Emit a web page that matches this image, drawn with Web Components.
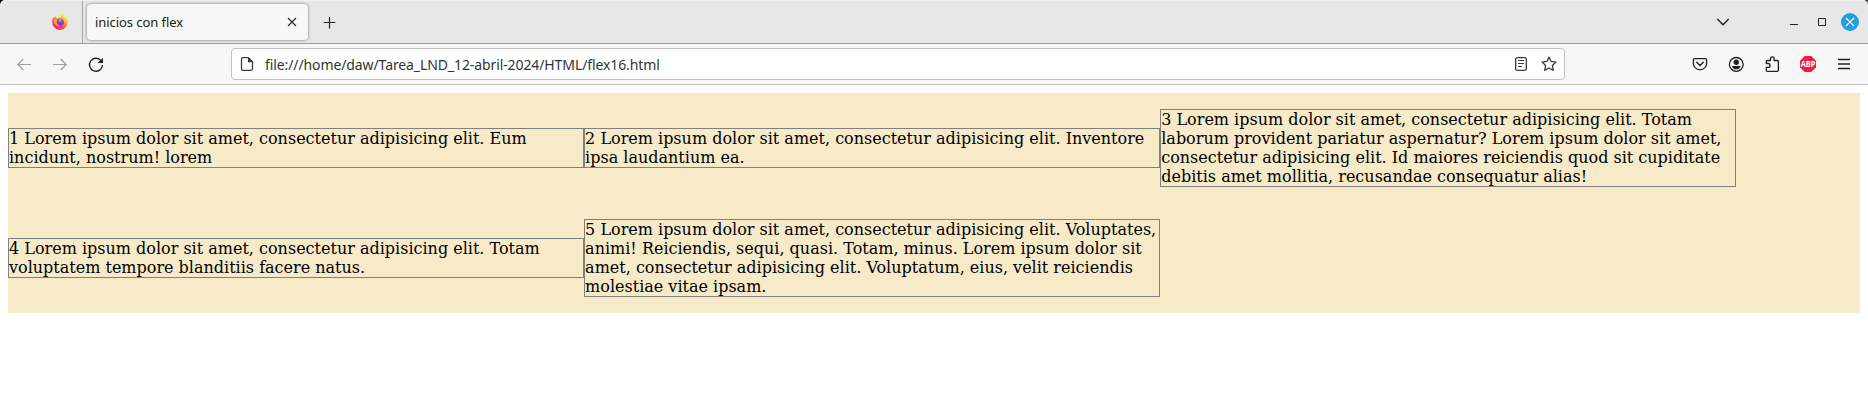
<!DOCTYPE html>
<html lang="es">
<head>
<meta charset="utf-8">
<title>inicios con flex</title>
<style>
html{background:#fff}
body{margin:0;font-family:"DejaVu Serif",serif;font-size:16px;color:#000}
</style>
</head>
<body>
<browser-window>
  <tab-bar slot="tabs"><browser-tab>inicios con flex</browser-tab></tab-bar>
  <nav-bar slot="nav">file:///home/daw/Tarea_LND_12-abril-2024/HTML/flex16.html</nav-bar>
  <flex-demo>
    <flex-item>1 Lorem ipsum dolor sit amet, consectetur adipisicing elit. Eum incidunt, nostrum! lorem</flex-item>
    <flex-item>2 Lorem ipsum dolor sit amet, consectetur adipisicing elit. Inventore ipsa laudantium ea.</flex-item>
    <flex-item>3 Lorem ipsum dolor sit amet, consectetur adipisicing elit. Totam laborum provident pariatur aspernatur? Lorem ipsum dolor sit amet, consectetur adipisicing elit. Id maiores reiciendis quod sit cupiditate debitis amet mollitia, recusandae consequatur alias!</flex-item>
    <flex-item>4 Lorem ipsum dolor sit amet, consectetur adipisicing elit. Totam voluptatem tempore blanditiis facere natus.</flex-item>
    <flex-item>5 Lorem ipsum dolor sit amet, consectetur adipisicing elit. Voluptates, animi! Reiciendis, sequi, quasi. Totam, minus. Lorem ipsum dolor sit amet, consectetur adipisicing elit. Voluptatum, eius, velit reiciendis molestiae vitae ipsam.</flex-item>
  </flex-demo>
</browser-window>
<script>
const define = (name, html) => customElements.define(name, class extends HTMLElement {
  constructor() {
    super();
    const t = document.createElement('template');
    t.innerHTML = html;
    this.attachShadow({mode: 'open'}).append(t.content.cloneNode(true));
  }
});

const ICONS = {
  firefox: `<defs><linearGradient id="f" x1=".85" y1=".1" x2=".2" y2=".95"><stop offset="0" stop-color="#fff14a"/><stop offset=".3" stop-color="#ffb62c"/><stop offset=".6" stop-color="#ff4f3f"/><stop offset="1" stop-color="#f0159a"/></linearGradient></defs>
    <path fill="url(#f)" d="M15.2 5.3c-.4-.8-1-1.600-1.600-1.900.3.700.4 1.200.4 1.500C12.900 2.700 11.200 1.900 10.400 0 9 1 8.800 2.600 8.700 3.100c-.9.100-1.800.4-2.500.9-.8-.1-1.500 0-1.900.1-.5-.4-.8-1-.8-1.800-.7.4-1.300 1.100-1.600 1.900l-.2-1C.9 4.200.2 5.800.2 8a7.800 7.800 0 0 0 15.600.4c.1-1.100-.1-2.200-.6-3.100z"/>
    <path fill="#ffa62b" d="M1.800 5.500c1-.9 2.300-1.200 3.500-.7.700.5 1.700.6 2.500.6-.2.800-1.300 1.200-2.100 1.700.2 2.800 2.900 3.700 4.800 2.400-1.100 2.200-3.600 3-5.800 1.900C2.500 10.400 1.400 7.800 1.800 5.500z"/>
    <path fill="#7542e5" d="M5 5.800c1-.8 2-.8 3-.6.100.8-1.300 1-1.900 1.500.4 1.400 1.500 1.700 2.500 1.400 1.100-.4 1.100-1.700.2-2.300 2.200-.2 3.500 1.600 3.100 3.500-.5 2-2.500 2.900-4.400 2.500C5.300 11.300 4.200 9.300 5 5.800z"/>
    <path fill="#9059ff" d="M8.200 4.200c2 .1 3.300 1.400 3.600 3.100-.6-1-1.500-1.500-2.500-1.500z"/>`,
  close: `<path d="M4 4l8 8M12 4l-8 8" stroke-width="1.100"/>`,
  plus: `<path d="M7.500 3v11.500M1.800 8.500h11.500" stroke-width="1.200"/>`,
  chevron: `<path d="M2.300 5l5.700 5.800L13.700 5" stroke-width="1.400"/>`,
  minimize: `<path d="M4 10.500h8" stroke-width="1"/>`,
  maximize: `<path d="M4.500 4.500h7v7h-7z" stroke-width="1"/>`,
  back: `<path d="M15 8.500H1.600M7.300 3L1.800 8.500l5.500 5.500" stroke-width="1.200"/>`,
  forward: `<path d="M1 8.500h13.400M8.700 3l5.500 5.500-5.500 5.500" stroke-width="1.200"/>`,
  reload: `<path d="M13.200 4.800a6.500 6.500 0 1 0 1.300 4.200" stroke-width="1.400"/><path d="M15 1.700v5.300H9.700z" fill="currentColor" stroke="none"/>`,
  page: `<path d="M4 1.700h5.500l4 4v7.100c0 .9-.6 1.500-1.500 1.500H4c-.9 0-1.500-.6-1.500-1.500V3.200c0-.9.6-1.500 1.500-1.500z" stroke-width="1.300"/><path d="M9 1.500v4.700h4.800z" fill="currentColor" stroke="none"/>`,
  reader: `<rect x="2.650" y="1.650" width="10.700" height="12.700" rx="1.500" stroke-width="1.300"/><path d="M5 4.500h6M5 7.500h6M5 10.500h4" stroke-width="1.200"/>`,
  star: `<path d="M8 1l2.050 4.450 4.950.6-3.600 3.400.9 4.900L8 12l-4.300 2.350.9-4.900L1 6.050l4.950-.6z" stroke-width="1.300" stroke-linejoin="round"/>`,
  pocket: `<path d="M2.700 2.600h10.600c.8 0 1.300.5 1.300 1.300v3.300a6.600 6.600 0 0 1-13.200 0V3.900c0-.8.500-1.300 1.300-1.300z" stroke-width="1.300"/><path d="M4.700 6.300L8 9.500l3.300-3.200" stroke-width="1.400" stroke-linecap="round"/>`,
  account: `<circle cx="8.300" cy="8.400" r="6.900" stroke-width="1.300"/><circle cx="8.300" cy="6.300" r="2.700" fill="currentColor" stroke="none"/><path d="M4 9.900h8.600c-.2 2-2 3.400-4.300 3.400S4.200 11.900 4 9.900z" fill="currentColor" stroke="none"/>`,
  puzzle: `<path d="M2.300 7.500V5.600c0-.7.400-1.100 1.100-1.100h3.100V2.600a1.800 1.800 0 0 1 3.600 0v1.900h3.200c.7 0 1.100.4 1.100 1.100v8.700c0 .7-.4 1.100-1.100 1.100H3.400c-.7 0-1.100-.4-1.100-1.100v-2.900h1.800a1.900 1.900 0 0 0 0-3.900z" stroke-width="1.300" stroke-linejoin="round"/>`,
  abp: `<path d="M4.700 0h6.600L16 4.700v6.600L11.300 16H4.700L0 11.300V4.700z" fill="#ed1e45" stroke="none"/><text x="8" y="11" text-anchor="middle" textLength="14.600" lengthAdjust="spacingAndGlyphs" font-family="Open Sans,sans-serif" font-weight="700" font-size="8.400" fill="#fff" stroke="none">ABP</text>`,
  menu: `<path d="M2 3.500h12M2 8h12M2 12.500h12" stroke-width="1.300"/>`
};

customElements.define('ui-icon', class extends HTMLElement {
  constructor() { super(); this.attachShadow({mode: 'open'}); }
  connectedCallback() {
    this.shadowRoot.innerHTML = `<style>:host{display:block;flex:none;width:16px;height:16px}svg{display:block;overflow:visible}</style>
      <svg width="16" height="16" viewBox="0 0 16 16" fill="none" ${this.getAttribute('name') === 'firefox' ? '' : 'stroke="currentColor"'}>${ICONS[this.getAttribute('name')]}</svg>`;
  }
});

define('browser-window', `<style>
  :host{display:flex;flex-direction:column;height:401px;background:#fff}
  main{padding:8px}
</style><slot name="tabs"></slot><slot name="nav"></slot><main><slot></slot></main>`);

define('tab-bar', `<style>
  :host{display:block;height:44px;background:linear-gradient(90deg,#000 50%,#444 50%);color:#222}
  .bar{display:flex;align-items:center;box-sizing:border-box;height:44px;background:#e7e7e7;border-bottom:1px solid #9c9c9c;border-top:1px solid #f0f0f0;border-radius:5px 5px 0 0}
  .pinned{display:flex;align-items:center;justify-content:flex-end;box-sizing:border-box;width:83px;height:42px;padding-right:14px;border-right:1px solid #a8a8a8}
  .plus{margin-left:14px}
  .list{margin-left:auto;margin-right:55px}
  .controls{display:flex;align-items:center;gap:12px;padding-right:9px}
  .x{display:flex;align-items:center;justify-content:center;width:18px;height:18px;margin-left:-1px;border-radius:50%;background:#209fe0;color:#fff}
</style>
<div class="bar">
  <div class="pinned"><ui-icon name="firefox"></ui-icon></div>
  <slot></slot>
  <ui-icon class="plus" name="plus"></ui-icon>
  <ui-icon class="list" name="chevron"></ui-icon>
  <div class="controls"><ui-icon name="minimize"></ui-icon><ui-icon name="maximize"></ui-icon><div class="x"><ui-icon name="close"></ui-icon></div></div>
</div>`);

define('browser-tab', `<style>
  :host{display:flex;align-items:center;justify-content:space-between;box-sizing:border-box;width:221px;height:36px;margin-left:4px;padding:0 8px;background:#f7f7f7;border-radius:4px;box-shadow:0 0 3px rgba(0,0,0,.5);font:13px/18px "Noto Sans",sans-serif;letter-spacing:-.07px;color:#222}
</style><span><slot></slot></span><ui-icon name="close"></ui-icon>`);

define('nav-bar', `<style>
  :host{display:flex;align-items:center;box-sizing:border-box;height:41px;padding:0 16px;background:#f7f7f7;border-bottom:1px solid #c4c4c4;color:#222}
  .history{display:flex;gap:20px;width:215px}
  .off{color:#a0a0a0}
  .url{display:flex;align-items:center;box-sizing:border-box;width:1334px;height:32px;padding:0 7px 0 7px;background:#fff;border:1px solid #c0c0c0;border-radius:4px;color:#3a3a3a}
  .text{flex:1;margin-left:10px;padding-top:2px;font:14px/20px "Noto Sans",sans-serif;letter-spacing:-.1px;white-space:nowrap;color:#333}
  .page-actions{display:flex;gap:12px}
  .tools{display:flex;gap:20px;margin-left:auto}
</style>
<div class="history"><ui-icon class="off" name="back"></ui-icon><ui-icon class="off" name="forward"></ui-icon><ui-icon name="reload"></ui-icon></div>
<div class="url"><ui-icon name="page"></ui-icon><span class="text"><slot></slot></span><div class="page-actions"><ui-icon name="reader"></ui-icon><ui-icon name="star"></ui-icon></div></div>
<div class="tools"><ui-icon name="pocket"></ui-icon><ui-icon name="account"></ui-icon><ui-icon name="puzzle"></ui-icon><ui-icon name="abp"></ui-icon><ui-icon name="menu"></ui-icon></div>`);

define('flex-demo', `<style>
  :host{display:flex;flex-wrap:wrap;align-items:center;background:#f6eac8}
</style><slot></slot>`);

define('flex-item', `<style>
  :host{display:block;width:31%;margin:16px 0;border:1px solid #808080;line-height:19px}
</style><slot></slot>`);
</script>
</body>
</html>
